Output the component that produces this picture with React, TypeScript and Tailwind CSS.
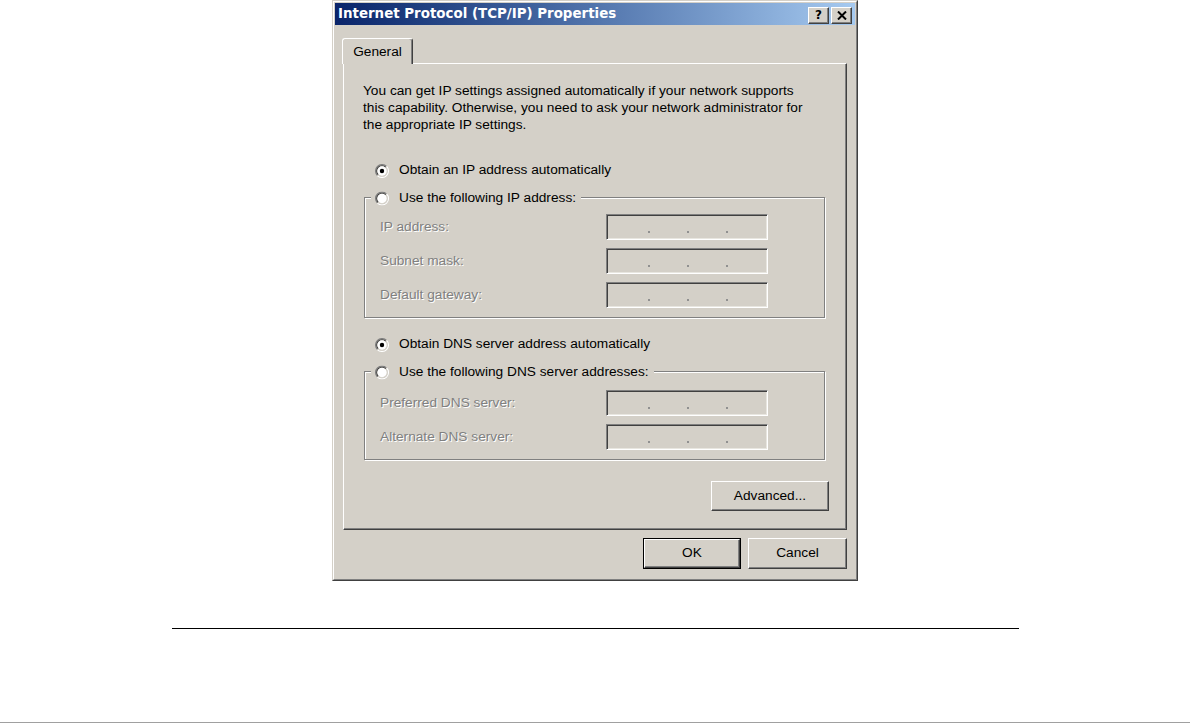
import type { ReactNode } from 'react'

const face = "font-['Liberation_Sans',Arial,sans-serif] text-[13.7px]"
const disabledText = "text-[#808080] [text-shadow:1px_1px_0_#ffffff]"

// ---------------------------------------------------------------------------
// Radio (classic sunken circle)
// ---------------------------------------------------------------------------
function Radio({ checked }: { checked?: boolean }) {
  return (
    <svg width="14" height="14" viewBox="0 0 12 12" className="shrink-0">
      <path d="M2.1 9.9 A5.5 5.5 0 0 1 9.9 2.1" fill="none" stroke="#808080" strokeWidth="1" />
      <path d="M9.9 2.1 A5.5 5.5 0 0 1 2.1 9.9" fill="none" stroke="#ffffff" strokeWidth="1" />
      <path d="M2.8 9.2 A4.5 4.5 0 0 1 9.2 2.8" fill="none" stroke="#404040" strokeWidth="1" />
      <path d="M9.2 2.8 A4.5 4.5 0 0 1 2.8 9.2" fill="none" stroke="#d4d0c8" strokeWidth="1" />
      <circle cx="6" cy="6" r="4" fill="#ffffff" />
      {checked && <circle cx="6" cy="6" r="1.9" fill="#000000" />}
    </svg>
  )
}

function RadioRow({ checked, label }: { checked?: boolean; label: string }) {
  return (
    <div className="flex items-center gap-[10px] h-[17px] text-black">
      <Radio checked={checked} />
      <span className="whitespace-nowrap">{label}</span>
    </div>
  )
}

// ---------------------------------------------------------------------------
// Button
// ---------------------------------------------------------------------------
function Btn({ children, className }: { children: ReactNode; className?: string }) {
  return (
    <div
      className={
        'flex items-center justify-center bg-[#d4d0c8] text-black border border-t-white border-l-white border-r-[#404040] border-b-[#404040] shadow-[inset_-1px_-1px_#808080] ' +
        (className ?? '')
      }
    >
      {children}
    </div>
  )
}

// ---------------------------------------------------------------------------
// Disabled IP field
// ---------------------------------------------------------------------------
function IpField() {
  return (
    <div className="w-[162px] h-[26px] bg-[#d4d0c8] border border-t-[#808080] border-l-[#808080] border-r-white border-b-white shadow-[inset_1px_1px_#404040,inset_-1px_-1px_#e8e6e0] flex items-end pb-[6px] pl-[41px] gap-[37px]">
      <div className="w-[2px] h-[2px] bg-[#909090]" />
      <div className="w-[2px] h-[2px] bg-[#909090]" />
      <div className="w-[2px] h-[2px] bg-[#909090]" />
    </div>
  )
}

function FieldRow({ label }: { label: string }) {
  return (
    <div className="flex items-center h-[26px]">
      <span className={'w-[226px] whitespace-nowrap ' + disabledText}>{label}</span>
      <IpField />
    </div>
  )
}

// ---------------------------------------------------------------------------
// Group box (etched) with radio legend
// ---------------------------------------------------------------------------
function GroupBox({ legend, labels, padTop }: { legend: string; labels: string[]; padTop: string }) {
  return (
    <div className={'relative w-[461px] border border-[#808080] shadow-[inset_1px_1px_#ffffff,1px_1px_#ffffff] pl-[15px] pb-[9px] flex flex-col gap-[8px] ' + padTop}>
      <div className="absolute left-[6px] top-0 -translate-y-1/2 bg-[#d4d0c8] pl-[4px] pr-[5px]">
        <RadioRow label={legend} />
      </div>
      {labels.map((l) => (
        <FieldRow key={l} label={l} />
      ))}
    </div>
  )
}

// ---------------------------------------------------------------------------
// App
// ---------------------------------------------------------------------------
export default function App() {
  return (
    <div className={'w-[1190px] h-[724px] bg-white flex flex-col items-center ' + face}>
      {/* Dialog window */}
      <div className="w-[526px] h-[581px] bg-[#d4d0c8] border border-t-[#d4d0c8] border-l-[#d4d0c8] border-r-[#404040] border-b-[#404040]">
        <div className="h-full border border-t-white border-l-white border-r-[#808080] border-b-[#808080] p-[1px] flex flex-col">
          {/* Title bar */}
          <div className="h-[22px] flex items-center justify-between bg-gradient-to-r from-[#0a246a] to-[#a6caf0] pl-[3px] pr-[3px]">
            <span className="font-['DejaVu_Sans',Verdana,sans-serif] text-[13.4px] font-bold text-white whitespace-nowrap">
              Internet Protocol (TCP/IP) Properties
            </span>
            <div className="flex gap-[2px] mt-[2px]">
              <Btn className="w-[21px] h-[17px]">
                <span className="font-['DejaVu_Sans',sans-serif] font-bold text-[12px] leading-none">?</span>
              </Btn>
              <Btn className="w-[21px] h-[17px]">
                <svg width="10" height="9" viewBox="0 0 10 9">
                  <path d="M1 0.5 L9 8.5 M9 0.5 L1 8.5" stroke="#000" strokeWidth="2" />
                </svg>
              </Btn>
            </div>
          </div>

          {/* Tab strip */}
          <div className="mt-[13px] ml-[7px] relative z-10 -mb-[1px]">
            <div className="w-[71px] h-[26px] bg-[#d4d0c8] border-t border-l border-t-white border-l-white border-r border-r-[#404040] shadow-[inset_-1px_0_#808080] rounded-t-[3px] flex items-start justify-center pt-[3px] text-black">
              General
            </div>
          </div>

          {/* Tab panel */}
          <div className="mx-[8px] h-[467px] bg-[#d4d0c8] border border-t-white border-l-white border-r-[#404040] border-b-[#404040] shadow-[inset_-1px_-1px_#808080] flex flex-col pl-[19px] pt-[18px] text-black">
            <p className="leading-[17px] whitespace-nowrap">
              You can get IP settings assigned automatically if your network supports
              <br />
              this capability. Otherwise, you need to ask your network administrator for
              <br />
              the appropriate IP settings.
            </p>

            <div className="mt-[29px] ml-[12px]">
              <RadioRow checked label="Obtain an IP address automatically" />
            </div>

            <div className="mt-[18px] ml-[1px]">
              <GroupBox
                legend="Use the following IP address:"
                labels={['IP address:', 'Subnet mask:', 'Default gateway:']}
                padTop="pt-[16px]"
              />
            </div>

            <div className="mt-[18px] ml-[12px]">
              <RadioRow checked label="Obtain DNS server address automatically" />
            </div>

            <div className="mt-[18px] ml-[1px]">
              <GroupBox
                legend="Use the following DNS server addresses:"
                labels={['Preferred DNS server:', 'Alternate DNS server:']}
                padTop="pt-[18px]"
              />
            </div>

            <div className="mt-[21px] flex justify-end pr-[17px]">
              <Btn className="w-[118px] h-[30px]">Advanced...</Btn>
            </div>
          </div>

          {/* Dialog buttons */}
          <div className="mt-[8px] flex justify-end gap-[7px] pr-[8px]">
            <div className="border border-black">
              <Btn className="w-[96px] h-[29px]">OK</Btn>
            </div>
            <Btn className="w-[99px] h-[31px]">Cancel</Btn>
          </div>
        </div>
      </div>

      {/* Rules below */}
      <div className="mt-[47px] w-[847px] h-[1px] bg-black" />
      <div className="flex-1" />
      <div className="w-full h-[1px] bg-[#a0a0a0]" />
      <div className="h-[1px]" />
    </div>
  )
}
